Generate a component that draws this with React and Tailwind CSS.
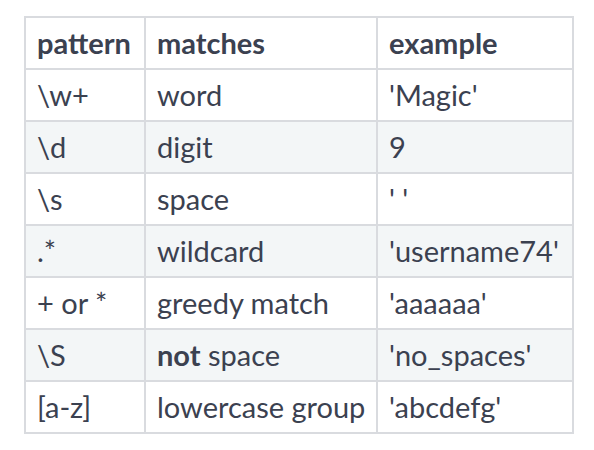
export default function App() {
  const rows = [
    ["\\w+", "word", "'Magic'"],
    ["\\d", "digit", "9"],
    ["\\s", "space", "' '"],
    [".*", "wildcard", "'username74'"],
    ["+ or *", "greedy match", "'aaaaaa'"],
    ["\\S", null, "'no_spaces'"],
    ["[a-z]", "lowercase group", "'abcdefg'"],
  ];
  const cell = "border-2 border-[#d9dbdf] px-[11px] h-[52px] p-0 align-middle leading-[32px] whitespace-nowrap";
  return (
    <div className="w-[594px] h-[450px] bg-white pt-[16px] pl-[24px] text-[29px] text-[#3b4150]" style={{ fontFamily: "Lato, 'Liberation Sans', sans-serif" }}>
      <table className="border-collapse table-fixed w-[548px]">
        <colgroup>
          <col className="w-[120px]" />
          <col className="w-[232px]" />
          <col className="w-[196px]" />
        </colgroup>
        <thead>
          <tr className="bg-white">
            <th className={cell + " text-left font-bold"}>pattern</th>
            <th className={cell + " text-left font-bold"}>matches</th>
            <th className={cell + " text-left font-bold"}>example</th>
          </tr>
        </thead>
        <tbody>
          {rows.map((r, i) => (
            <tr key={i} className={i % 2 === 1 ? "bg-[#f3f6f7]" : "bg-white"}>
              <td className={cell}>{r[0]}</td>
              <td className={cell}>{r[1] === null ? (<><span className="font-bold">not</span> space</>) : r[1]}</td>
              <td className={cell}>{r[2]}</td>
            </tr>
          ))}
        </tbody>
      </table>
    </div>
  );
}
